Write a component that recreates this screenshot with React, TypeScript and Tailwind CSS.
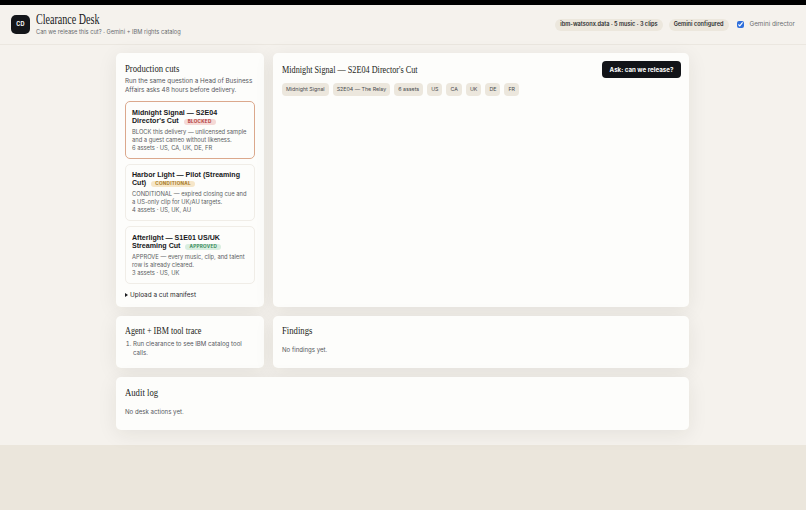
const sans = "font-['Inter','Liberation_Sans',sans-serif]";
const serif = "font-['Liberation_Serif',serif]";
const arial = "font-['Liberation_Sans',sans-serif]";

function Cut({ title, badge, badgeClass, desc, meta, active }: { title: string; badge: string; badgeClass: string; desc: string; meta: string; active?: boolean }) {
  return (
    <div className={`rounded-[5px] border px-[6px] pt-[6.5px] h-[57.5px] bg-[#fdfdfb] ${active ? "border-[#dba88c]" : "border-[#f0ede7]"}`}>
      <div className={`${arial} text-[7.1px] leading-[8px] font-bold text-[#17181a]`}>
        {title}
        <span className={`${sans} ml-[5px] inline-block rounded-full px-[4px] text-[4.6px] leading-[6px] font-bold tracking-[0.3px] ${badgeClass}`}>{badge}</span>
      </div>
      <p className="mt-[3px] text-[5.8px] leading-[8px] text-[#5c5e62]">{desc}</p>
      <p className="text-[5.8px] leading-[8px] text-[#5c5e62]">{meta}</p>
    </div>
  );
}

function Chip({ children }: { children: string }) {
  return <span className="rounded-[4px] bg-[#ece7dd] px-[4px] h-[13px] flex items-center text-[5.3px] text-[#4a4c50]">{children}</span>;
}

function Card({ className, children }: { className: string; children: React.ReactNode }) {
  return <section className={`rounded-[5px] bg-[#fdfdfb] shadow-[0_4px_20px_rgba(40,35,25,0.08)] ${className}`}>{children}</section>;
}

function Title({ children, className = "scale-x-[0.79]" }: { children: string; className?: string }) {
  return <h2 className={`${serif} text-[11px] leading-[12px] text-[#1c1d20] origin-left whitespace-nowrap ${className}`}>{children}</h2>;
}

export default function App() {
  return (
    <div className={`${sans} w-[806px] h-[510px] bg-[#ebe6dc] overflow-hidden flex flex-col`}>
      <div className="h-[5px] bg-black shrink-0" />
      <header className="h-[40px] shrink-0 bg-[#f5f2ed] border-b border-[#ebe7e0] flex items-center px-[11px]">
        <div className="w-[19px] h-[19px] rounded-[5px] bg-[#14161a] text-white text-[5.5px] font-bold tracking-[0.3px] flex items-center justify-center">CD</div>
        <div className="ml-[6px]">
          <h1 className={`${serif} text-[14px] leading-[14px] text-[#17181a] scale-x-[0.72] origin-left whitespace-nowrap`}>Clearance Desk</h1>
          <p className="text-[5.7px] leading-[9px] text-[#6b6d70]">Can we release this cut? · Gemini + IBM rights catalog</p>
        </div>
        <div className="ml-auto flex items-center">
          <span className="rounded-full bg-[#ece7dd] h-[12px] px-[5px] flex items-center text-[5.6px] font-semibold text-[#2a2b2e]">ibm-watsonx.data · 5 music · 3 clips</span>
          <span className="ml-[6px] rounded-full bg-[#ece7dd] h-[12px] px-[5px] flex items-center text-[5.6px] font-semibold text-[#2a2b2e]">Gemini configured</span>
          <input type="checkbox" defaultChecked className="ml-[8px] w-[7px] h-[7px] accent-[#2f6fdb] m-0" />
          <span className="ml-[6px] text-[6.3px] text-[#6b6d70]">Gemini director</span>
        </div>
      </header>
      <main className="h-[400px] shrink-0 bg-[#f5f2ed] pt-[8px] pl-[116px]">
        <div className="w-[573px] flex flex-col gap-[9px]">
          <div className="flex gap-[9px] h-[254px]">
            <Card className="w-[148px] px-[9px] pt-[9px]">
              <Title>Production cuts</Title>
              <p className="mt-[2.5px] text-[6.3px] leading-[9.25px] text-[#55575b]">Run the same question a Head of Business Affairs asks 48 hours before delivery.</p>
              <div className="mt-[6px] flex flex-col gap-[5px]">
                <Cut active title="Midnight Signal — S2E04 Director's Cut" badge="BLOCKED" badgeClass="bg-[#f5d9d6] text-[#b23a3a]" desc="BLOCK this delivery — unlicensed sample and a guest cameo without likeness." meta="6 assets · US, CA, UK, DE, FR" />
                <Cut title="Harbor Light — Pilot (Streaming Cut)" badge="CONDITIONAL" badgeClass="bg-[#f6e6c8] text-[#a67a25]" desc="CONDITIONAL — expired closing cue and a US-only clip for UK/AU targets." meta="4 assets · US, UK, AU" />
                <Cut title="Afterlight — S1E01 US/UK Streaming Cut" badge="APPROVED" badgeClass="bg-[#d9eee0] text-[#3a8a5c]" desc="APPROVE — every music, clip, and talent row is already cleared." meta="3 assets · US, UK" />
              </div>
              <div className="mt-[7px] flex items-center text-[6.4px] leading-[9px] text-[#2a2b2e]">
                <span className="w-0 h-0 border-y-[2.5px] border-y-transparent border-l-[3.5px] border-l-[#1c1d20] mr-[2px]" />
                Upload a cut manifest
              </div>
            </Card>
            <Card className="w-[416px] pl-[9px] pr-[8px] pt-[8px]">
              <div className="flex items-start justify-between">
                <Title className="leading-[16px] scale-x-[0.745]">Midnight Signal — S2E04 Director's Cut</Title>
                <button className="h-[17px] w-[79px] rounded-[4px] bg-[#121418] text-white text-[6.2px] font-bold">Ask: can we release?</button>
              </div>
              <div className="mt-[5px] flex gap-[4px]">
                {["Midnight Signal", "S2E04 — The Relay", "6 assets", "US", "CA", "UK", "DE", "FR"].map((t) => <Chip key={t}>{t}</Chip>)}
              </div>
            </Card>
          </div>
          <div className="flex gap-[9px] h-[52px]">
            <Card className="w-[148px] px-[9px] pt-[8px]">
              <Title className="scale-x-[0.74]">Agent + IBM tool trace</Title>
              <ol className="mt-[3px] text-[6.1px] leading-[9px] text-[#55575b] pl-[8px] list-decimal"><li>Run clearance to see IBM catalog tool calls.</li></ol>
            </Card>
            <Card className="w-[416px] px-[9px] pt-[8px]">
              <Title>Findings</Title>
              <p className="mt-[9px] text-[6.1px] leading-[9px] text-[#55575b]">No findings yet.</p>
            </Card>
          </div>
          <Card className="h-[53px] px-[9px] pt-[9px]">
            <Title>Audit log</Title>
            <p className="mt-[9px] text-[6.1px] leading-[9px] text-[#55575b]">No desk actions yet.</p>
          </Card>
        </div>
      </main>
    </div>
  );
}
